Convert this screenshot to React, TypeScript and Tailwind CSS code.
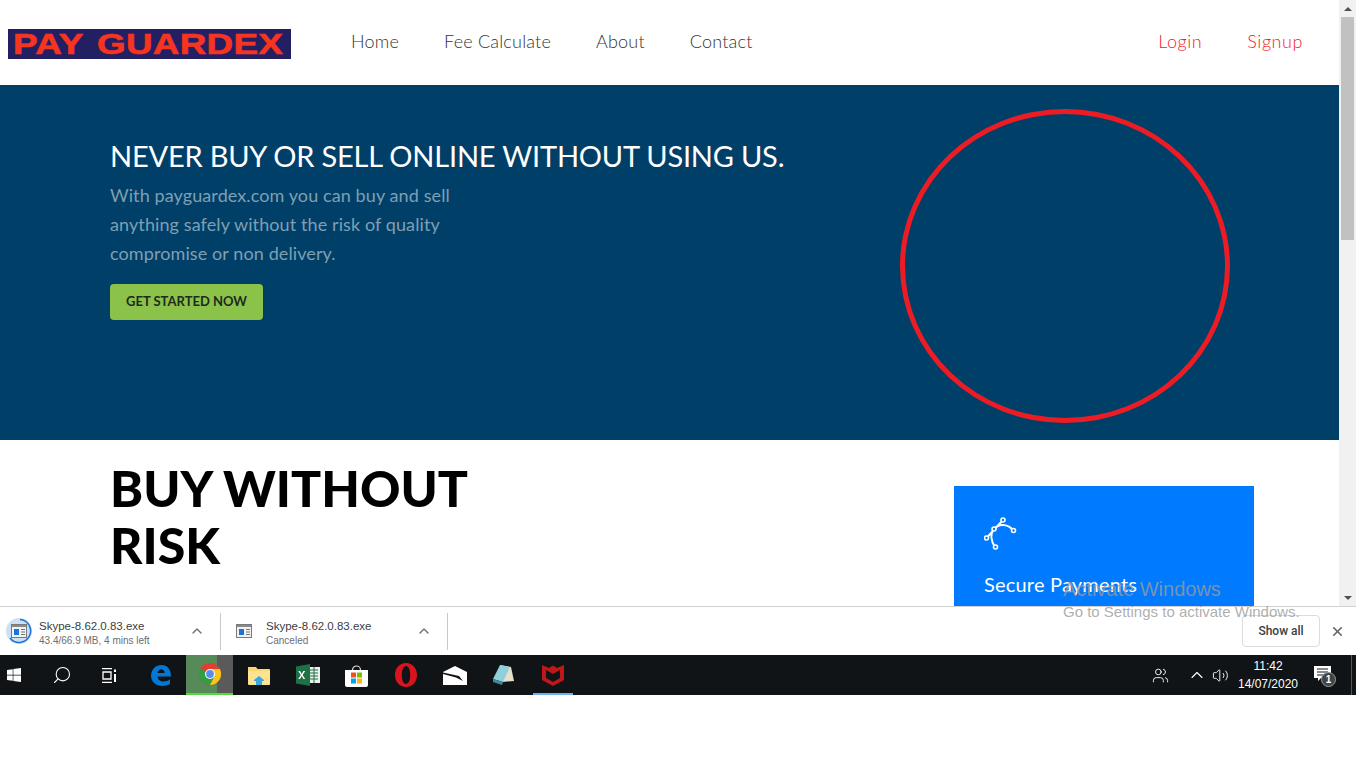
import { FaWindows } from "react-icons/fa";
import { ChevronUp, Search, X, Volume2, Users } from "lucide-react";

const navLinks = ["Home", "Fee Calculate", "About", "Contact"];

const ExeIcon = () => (
    <svg width="16" height="14" viewBox="0 0 16 14">
        <rect x="0.5" y="0.5" width="15" height="13" fill="#f2f2f2" stroke="#7a7a7a" />
        <rect x="1" y="1" width="14" height="2" fill="#8a8a8a" />
        <rect x="3" y="5" width="5" height="6" fill="#1a73d8" />
        <path d="M10 5.5h4M10 8h4M10 10.500h4" stroke="#777" />
    </svg>
);

const DownloadItem = ({ sub, progress }: { sub: string; progress?: boolean }) => (
    <div className={`flex items-center h-[37px] border-r border-[#c8c8c8] shrink-0 ${progress ? "w-[221px]" : "w-[227px]"}`}>
        <div className={`flex items-center justify-center shrink-0 ${progress ? "w-[39px] pr-[1px]" : "w-[45px]"}`}>
            {progress ? (
                <div className="relative w-[26px] h-[26px] rounded-full bg-[#cfe0f5] flex items-center justify-center">
                    <svg className="absolute inset-0" width="26" height="26" viewBox="0 0 26 26">
                        <path d="M14 1.500A11.500 11.500 0 1 1 4 20" fill="none" stroke="#1a73d8" strokeWidth="1.500" />
                    </svg>
                    <ExeIcon />
                </div>
            ) : (
                <ExeIcon />
            )}
        </div>
        <div className="flex flex-col flex-1 min-w-0 pt-[3px] font-['Liberation_Sans',sans-serif]">
            <span className="text-[11.5px] leading-[15px] text-[#3c4043]">Skype-8.62.0.83.exe</span>
            <span className="text-[10px] leading-[13px] text-[#6b6f73]">{sub}</span>
        </div>
        <ChevronUp className="w-[16px] h-[16px] text-[#6e6e6e] mr-[15px]" strokeWidth={2} />
    </div>
);

const SlotClass = "flex items-center justify-center h-[40px] shrink-0";

const App = () => {
    return (
        <div className="w-[1366px] h-[768px] overflow-hidden bg-white font-['Lato','Noto_Sans',sans-serif]">
            <div className="relative w-[1356px]">
                {/* browser viewport */}
                <div className="flex h-[606px]">
                    <div className="flex-1 min-w-0 overflow-hidden">
                        <header className="flex items-center h-[85px] pb-[2px] bg-white">
                            <div className="ml-[8px] mt-[5px] w-[283px] h-[30px] bg-[#231f63] flex items-center shrink-0">
                                <span className="pl-[4px] origin-left scale-x-[1.27] font-['Liberation_Sans',sans-serif] font-bold text-[#f5351f] [-webkit-text-stroke:0.6px_#f5351f] [word-spacing:3px] text-[29px] leading-[30px] tracking-[0.2px] whitespace-nowrap">
                                    PAY GUARDEX
                                </span>
                            </div>
                            <nav className="flex items-center gap-[45px] ml-[60px]">
                                {navLinks.map((link) => (
                                    <a key={link} className="text-[18px] font-light text-[#333] tracking-[0.2px]">{link}</a>
                                ))}
                            </nav>
                            <div className="flex items-center gap-[45px] ml-auto mr-[36px]">
                                <a className="text-[18px] font-light text-[#f01c24] tracking-[0.55px]">Login</a>
                                <a className="text-[18px] font-light text-[#f01c24] tracking-[0.55px]">Signup</a>
                            </div>
                        </header>

                        <section className="flex justify-between h-[355px] bg-[#004068] pl-[110px] pr-[109px]">
                            <div className="pt-[51px]">
                                <h2 className="text-[29px] leading-[40px] text-white tracking-[-0.2px] whitespace-nowrap">NEVER BUY OR SELL ONLINE WITHOUT USING US.</h2>
                                <p className="mt-[5px] w-[370px] text-[18px] leading-[29px] text-[#7f9fb3] tracking-[0.1px]">
                                    With payguardex.com you can buy and sell anything safely without the risk of quality compromise or non delivery.
                                </p>
                                <button className="mt-[16px] block w-[153px] h-[36px] rounded-[4px] bg-[#8bc34a] text-[13px] font-bold text-[#1f2a1c]">GET STARTED NOW</button>
                            </div>
                            <div className="mt-[24px] w-[330px] h-[314px] rounded-[50%] border-[5px] border-[#ed1c24] shrink-0" />
                        </section>

                        <section className="flex justify-between pl-[110px] pr-[85px] bg-white h-[166px]">
                            <h1 className="pt-[20px] w-[420px] text-[50px] leading-[57px] font-black text-black">BUY WITHOUT RISK</h1>
                            <div className="mt-[46px] w-[300px] h-[120px] bg-[#007bff] pl-[30px] pt-[30px] text-white">
                                <svg width="34" height="34" viewBox="0 0 34 34" fill="none" stroke="white" strokeWidth="2">
                                    <path d="M11 31C7 25 6 18 10 13C14 8 23 7 29.500 14.500M2.500 22 19 4" />
                                    <circle cx="19" cy="4" r="2" fill="#007bff" strokeWidth="1.600" />
                                    <circle cx="29.500" cy="14.500" r="2" fill="#007bff" strokeWidth="1.600" />
                                    <circle cx="10" cy="13" r="2" fill="#007bff" strokeWidth="1.600" />
                                    <circle cx="2.500" cy="22" r="2" fill="#007bff" strokeWidth="1.600" />
                                    <circle cx="11.500" cy="31" r="2" fill="#007bff" strokeWidth="1.600" />
                                </svg>
                                <div className="mt-[20px] text-[20px] leading-[28px] tracking-[0.2px]">Secure Payments</div>
                            </div>
                        </section>
                    </div>

                    {/* scrollbar */}
                    <div className="flex flex-col items-center w-[17px] shrink-0 bg-[#f1f1f1]">
                        <div className="flex items-center justify-center h-[17px]">
                            <div className="w-0 h-0 border-x-[4px] border-x-transparent border-b-[4px] border-b-[#505050]" />
                        </div>
                        <div className="w-[13px] h-[223px] bg-[#c1c1c1]" />
                        <div className="flex items-center justify-center h-[17px] mt-auto">
                            <div className="w-0 h-0 border-x-[4px] border-x-transparent border-t-[4px] border-t-[#505050]" />
                        </div>
                    </div>
                </div>

                {/* download shelf */}
                <div className="flex items-center h-[49px] bg-white border-t border-[#d0d0d0] font-['Liberation_Sans',sans-serif]">
                    <DownloadItem sub="43.4/66.9 MB, 4 mins left" progress />
                    <DownloadItem sub="Canceled" />
                    <button className="ml-auto mr-[10px] w-[78px] h-[32px] border border-[#dadce0] rounded-[4px] text-[12px] font-medium font-['Roboto',sans-serif] text-[#3c4043] bg-white">Show all</button>
                    <X className="w-[15px] h-[15px] text-[#5f6368] mr-[11px]" strokeWidth={2.500} />
                </div>

                {/* taskbar */}
                <div className="flex items-center h-[40px] bg-[#101417] text-white">
                    <div className={`${SlotClass} w-[28px]`}>
                        <FaWindows className="w-[16px] h-[16px]" />
                    </div>
                    <div className={`${SlotClass} w-[68px]`}>
                        <Search className="w-[20px] h-[20px] -scale-x-100" strokeWidth={1.300} />
                    </div>
                    <div className={`${SlotClass} w-[28px]`}>
                        <svg width="16" height="15" viewBox="0 0 16 15" fill="none" stroke="white" strokeWidth="1.300">
                            <path d="M0 0.700h10M0 14.300h10M1 4h8v7H1z" />
                            <path d="M13 1.500v2.500M13 6v8" strokeWidth="2" />
                        </svg>
                    </div>
                    <div className={`${SlotClass} w-[62px] pl-[12px]`}>
                        <svg width="22" height="22" viewBox="0 0 22 22">
                            <path d="M1 11.500C1.500 5 6 1 11.500 1c6 0 9.500 4.500 9.500 11.500H7.500c.3 3.200 3 5 6 5 2.500 0 5-.8 6.500-2v4.600c-2 1-4.400 1.900-7.400 1.900C5.600 22 1 17.500 1 11.500Zm6.500-2.500h7.200c-.2-2.300-1.500-3.800-3.500-3.800S7.800 6.700 7.500 9Z" fill="#0078d7" />
                        </svg>
                    </div>
                    <div className="relative flex items-center justify-center w-[47px] h-[40px] shrink-0 border-b-[2px] border-[#50dc3c] bg-[linear-gradient(to_right,#568a58_66%,#5a5a5a_66%)]">
                        <svg width="22" height="22" viewBox="0 0 22 22">
                            <circle cx="11" cy="11" r="11" fill="#e0402f" />
                            <path d="M11 11 1.500 5.500A11 11 0 0 0 11 22l5.500-9.500Z" fill="#2f9e44" />
                            <path d="M11 6h9.900A11 11 0 0 1 11 22l4.300-8.500Z" fill="#f7c51e" />
                            <circle cx="11" cy="11" r="5" fill="#fff" />
                            <circle cx="11" cy="11" r="3.900" fill="#5a8df0" />
                        </svg>
                    </div>
                    <div className={`${SlotClass} w-[51px]`}>
                        <svg width="22" height="19" viewBox="0 0 22 19">
                            <path d="M0 1h8l1.500 2H21a1 1 0 0 1 1 1v14H0Z" fill="#f8d775" />
                            <path d="M0 5h22v13a1 1 0 0 1-1 1H1a1 1 0 0 1-1-1Z" fill="#fde28f" />
                            <path d="M6 14l5-4 5 4v1h-2v4H8v-4H6Z" fill="#3aa7e0" />
                        </svg>
                    </div>
                    <div className={`${SlotClass} w-[47px]`}>
                        <svg width="24" height="22" viewBox="0 0 24 22">
                            <rect x="12" y="3" width="12" height="16" fill="#e8f2ea" />
                            <path d="M14 6h8M14 9h8M14 12h8M14 15h8M18 3v16" stroke="#1e7145" strokeWidth="1" />
                            <path d="M0 2.500 14 0v22L0 19.500Z" fill="#1e7145" />
                            <path d="m4 7 1.700 3L7.400 7h1.800l-2.600 4 2.600 4H7.400l-1.700-3-1.700 3H2.200l2.600-4-2.600-4Z" fill="#fff" />
                        </svg>
                    </div>
                    <div className={`${SlotClass} w-[50px]`}>
                        <svg width="23" height="23" viewBox="0 0 23 23">
                            <path d="M7.500 6a4 4 0 0 1 8 0" fill="none" stroke="#ddd" strokeWidth="1.200" />
                            <path d="M0 6h23v15a2 2 0 0 1-2 2H2a2 2 0 0 1-2-2Z" fill="#fff" />
                            <rect x="6" y="8.500" width="5" height="5" fill="#f25022" />
                            <rect x="12" y="8.500" width="5" height="5" fill="#7fba00" />
                            <rect x="6" y="14.500" width="5" height="5" fill="#00a4ef" />
                            <rect x="12" y="14.500" width="5" height="5" fill="#ffb900" />
                        </svg>
                    </div>
                    <div className={`${SlotClass} w-[49px]`}>
                        <svg width="22" height="24" viewBox="0 0 22 24">
                            <path fillRule="evenodd" d="M11 0c6.500 0 11 5.300 11 12s-4.500 12-11 12S0 18.700 0 12 4.500 0 11 0Zm0 3C8.300 3 6.800 7 6.800 12s1.500 9 4.200 9 4.200-4 4.200-9S13.700 3 11 3Z" fill="#d9141e" />
                        </svg>
                    </div>
                    <div className={`${SlotClass} w-[49px]`}>
                        <svg width="24" height="19" viewBox="0 0 24 19">
                            <path d="M0 6 12 0l12 6v13H0Z" fill="#fff" />
                            <path d="M0 6.500 16 10l4 5-7-3.500L0 8Z" fill="#101417" />
                        </svg>
                    </div>
                    <div className={`${SlotClass} w-[49px]`}>
                        <svg width="23" height="22" viewBox="0 0 23 22">
                            <path d="M8 1 19 3l3 14-12 1Z" fill="#e6e0c8" />
                            <path d="M8 1 18 3 11 18 1 15Z" fill="#8fd0da" />
                            <path d="M1 15l10 3-1 3-9-3Z" fill="#3d8a98" />
                        </svg>
                    </div>
                    <div className="flex items-center justify-center w-[40px] h-[40px] shrink-0 ml-[5px] border-b-[2px] border-[#6db1e8]">
                        <svg width="22" height="24" viewBox="0 0 22 24">
                            <path fillRule="evenodd" d="M0 3 7 6l4-2.500L15 6l7-3v15l-11 6-11-6Zm4 5v8l7 4 7-4V8l-7 4Z" fill="#c01818" />
                        </svg>
                    </div>

                    <div className="flex items-center ml-auto h-[40px] border-r border-[#555] mr-[4px]">
                        <Users className="w-[17px] h-[17px] mr-[18px]" strokeWidth={1.300} />
                        <ChevronUp className="w-[20px] h-[20px] mr-[5px]" strokeWidth={1.300} />
                        <Volume2 className="w-[17px] h-[17px] mr-[9px]" strokeWidth={1.300} />
                        <div className="flex flex-col items-center w-[60px] mr-[16px] font-['Liberation_Sans',sans-serif] text-[12px] leading-[18px] text-white">
                            <span>11:42</span>
                            <span>14/07/2020</span>
                        </div>
                        <div className="relative w-[18px] h-[18px] mr-[19px]">
                            <svg width="17" height="16" viewBox="0 0 17 16">
                                <path d="M0 0h17v12H7l-3 3v-3H0Z" fill="#fff" />
                                <path d="M3 3h11M3 6h11M3 9h7" stroke="#101417" />
                            </svg>
                            <span className="absolute left-[7px] top-[6px] flex items-center justify-center w-[15px] h-[15px] rounded-full bg-[#444] border border-[#999] text-[10px] font-bold text-white font-['Liberation_Sans',sans-serif]">1</span>
                        </div>
                    </div>
                </div>

                {/* watermark over the page */}
                <div className="absolute left-[1063px] top-[577px] font-['Liberation_Sans',sans-serif] text-[#9a9a9a]/80 whitespace-nowrap">
                    <div className="text-[20px] leading-[24px]">Activate Windows</div>
                    <div className="text-[15px] leading-[22px]">Go to Settings to activate Windows.</div>
                </div>
            </div>
        </div>
    );
};

export default App;
